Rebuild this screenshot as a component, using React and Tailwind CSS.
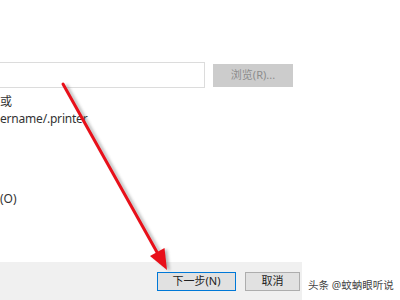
export default function App() {
  const font = { fontFamily: '"Noto Sans", "Noto Sans CJK SC", sans-serif' };
  return (
    <div className="relative w-[400px] h-[300px] overflow-hidden bg-white text-[#333] flex flex-col" style={font}>
      <div className="h-[62px] shrink-0" />
      <div className="flex items-center h-[26px] shrink-0">
        <div className="w-[205px] h-[26px] border border-l-0 border-[#dcdcdc] bg-white" />
        <div className="ml-[8px] w-[80px] h-[23px] bg-[#cccccc] flex items-center justify-center text-[11px] text-[#8c8c8c]">
          浏览(R)...
        </div>
      </div>
      <div className="mt-[6px] flex flex-col gap-[1px] text-[12px] text-[#333]">
        <div className="leading-[16px]">或</div>
        <div className="leading-[15px] tracking-[-0.2px]">ername/.printer</div>
      </div>
      <div className="mt-[65px] text-[12px] leading-[15px]">(O)</div>
      <div className="flex-1" />
      <div className="flex h-[38px] shrink-0">
        <div className="w-[302px] bg-[#f0f0f0] flex items-start justify-end pt-[10px] pr-[2px] gap-[9px]">
          <div className="w-[79px] h-[19px] border border-[#0078d7] bg-[#e1e1e1] flex items-center justify-center text-[11px] text-[#222]">
            下一步(N)
          </div>
          <div className="w-[55px] h-[19px] border border-[#adadad] bg-[#e1e1e1] flex items-center justify-center text-[11px] text-[#222]">
            取消
          </div>
        </div>
        <div className="flex-1 flex items-start pt-[16px] pl-[6px] text-[10.5px] text-[#444] whitespace-nowrap">
          头条 @蚊蚋眼听说
        </div>
      </div>
      <svg className="absolute inset-0 pointer-events-none" width="400" height="300" viewBox="0 0 400 300">
        <defs>
          <filter id="blur" x="-20%" y="-20%" width="140%" height="140%">
            <feGaussianBlur stdDeviation="1.5" />
          </filter>
        </defs>
        <g transform="translate(3,1)" opacity="0.45" filter="url(#blur)">
          <line x1="63" y1="84" x2="158" y2="254" stroke="#666" strokeWidth="3" />
          <polygon points="167,270 164,248 150,256" fill="#666" />
        </g>
        <line x1="63" y1="84" x2="158" y2="254" stroke="#e8101a" strokeWidth="3" strokeLinecap="round" />
        <polygon points="167,270 164.5,248 150,256" fill="#e8101a" />
      </svg>
    </div>
  );
}
